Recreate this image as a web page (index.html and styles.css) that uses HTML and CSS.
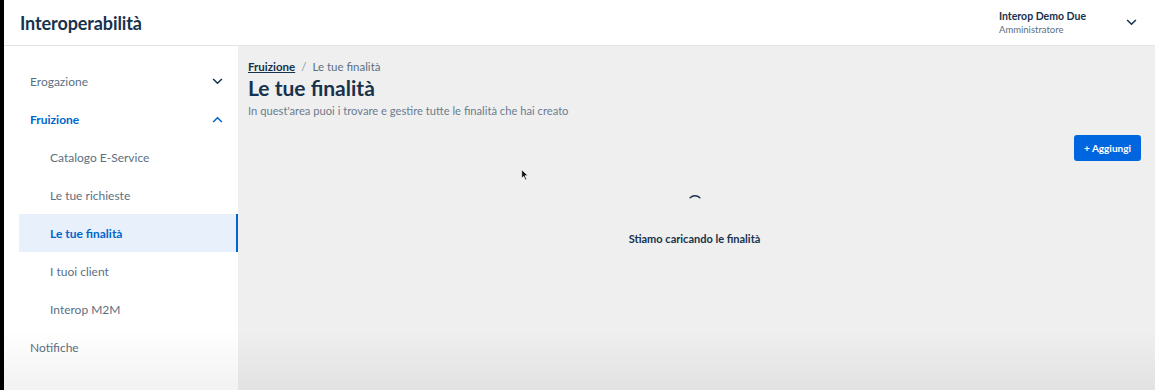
FILE: index.html
```html
<!DOCTYPE html>
<html lang="it">
<head>
  <meta charset="UTF-8">
  <meta name="viewport" content="width=device-width, initial-scale=1.0">
  <title>Interoperabilità - Le tue finalità</title>
  <link rel="stylesheet" href="styles.css">
</head>
<body>
  <div class="app">
    <header class="topbar">
      <h1 class="brand">Interoperabilità</h1>
      <div class="user">
        <div class="user-info">
          <span class="user-name">Interop Demo Due</span>
          <span class="user-role">Amministratore</span>
        </div>
        <svg class="chevron dark" viewBox="0 0 12 8" width="11" height="7"><path d="M1 1.2 L6 6 L11 1.2" fill="none" stroke="#17324d" stroke-width="1.8"/></svg>
      </div>
    </header>

    <div class="layout">
      <nav class="sidebar">
        <div class="nav-item">
          <span>Erogazione</span>
          <svg class="chevron" viewBox="0 0 12 8" width="11" height="7"><path d="M1 1.2 L6 6 L11 1.2" fill="none" stroke="#17324d" stroke-width="1.8"/></svg>
        </div>
        <div class="nav-item open">
          <span>Fruizione</span>
          <svg class="chevron" viewBox="0 0 12 8" width="11" height="7"><path d="M1 6.8 L6 2 L11 6.8" fill="none" stroke="#0066cc" stroke-width="1.8"/></svg>
        </div>
        <div class="nav-sub">Catalogo E-Service</div>
        <div class="nav-sub">Le tue richieste</div>
        <div class="nav-sub active">Le tue finalità</div>
        <div class="nav-sub">I tuoi client</div>
        <div class="nav-sub">Interop M2M</div>
        <div class="nav-item">
          <span>Notifiche</span>
        </div>
      </nav>

      <main class="content">
        <div class="breadcrumb">
          <a href="#">Fruizione</a>
          <span class="sep">/</span>
          <span>Le tue finalità</span>
        </div>
        <h2 class="page-title">Le tue finalità</h2>
        <p class="page-desc">In quest'area puoi i trovare e gestire tutte le finalità che hai creato</p>

        <div class="actions">
          <button class="btn-primary">+ Aggiungi</button>
        </div>

        <div class="loading">
          <svg class="spinner" viewBox="0 0 40 40" width="28" height="28"><path d="M13 14 A10 10 0 0 1 27 14" fill="none" stroke="#17324d" stroke-width="2" stroke-linecap="round"/></svg>
          <p>Stiamo caricando le finalità</p>
        </div>

        <svg class="cursor" viewBox="0 0 12 18" width="8" height="12"><path d="M1 1 L1 14 L4 11 L6.5 16.5 L8.5 15.5 L6 10 L10.5 10 Z" fill="#111" stroke="#fff" stroke-width="1"/></svg>
      </main>
    </div>
  </div>
  <div class="fade"></div>
</body>
</html>
```

FILE: styles.css
```css
body {
  margin: 0;
  font-family: "Lato", "Open Sans", sans-serif;
  color: #17324d;
  background: #000;
  height: 390px;
  overflow: hidden;
}

.app {
  margin-left: 4px;
  height: 390px;
  display: flex;
  flex-direction: column;
  background: #efefef;
}

.topbar {
  height: 45px;
  background: #fff;
  border-bottom: 1px solid #e3e3e3;
  display: flex;
  align-items: center;
  justify-content: space-between;
  padding: 0 16px;
}

.brand {
  margin: 0;
  font-size: 18px;
  font-weight: 700;
  color: #17324d;
  letter-spacing: -0.1px;
}

.user {
  display: flex;
  align-items: center;
  gap: 40px;
  margin-right: 2px;
}

.user-info {
  display: flex;
  flex-direction: column;
  gap: 2px;
}

.user-name {
  font-size: 10.5px;
  font-weight: 700;
}

.user-role {
  font-size: 9.5px;
  color: #5c6f82;
}

.layout {
  flex: 1;
  display: flex;
}

.sidebar {
  width: 234px;
  background: #fff;
  padding-top: 16px;
}

.nav-item,
.nav-sub {
  height: 38px;
  display: flex;
  align-items: center;
  justify-content: space-between;
  font-size: 12px;
  color: #5c6f82;
  box-sizing: border-box;
}

.nav-item {
  padding: 0 15px 0 26px;
}

.nav-item.open {
  color: #0066cc;
  font-weight: 700;
}

.nav-sub {
  margin-left: 15px;
  padding-left: 31px;
}

.nav-sub.active {
  background: #e8f0fb;
  color: #0066cc;
  font-weight: 700;
  border-right: 2px solid #0066cc;
}

.content {
  flex: 1;
  padding: 12px 14px 0 10px;
  position: relative;
}

.breadcrumb {
  font-size: 11.5px;
  color: #5c6f82;
  display: flex;
  gap: 6px;
  height: 16px;
  align-items: center;
}

.breadcrumb a {
  color: #17324d;
  font-weight: 700;
}

.sep {
  color: #8a97a5;
}

.page-title {
  margin: 0;
  font-size: 21px;
  font-weight: 700;
  line-height: 28px;
}

.page-desc {
  margin: 0;
  font-size: 11.2px;
  line-height: 18px;
  color: #6b7c8e;
}

.actions {
  display: flex;
  justify-content: flex-end;
  margin-top: 15px;
}

.btn-primary {
  background: #0066e0;
  color: #fff;
  border: none;
  border-radius: 3px;
  font-family: inherit;
  font-size: 10px;
  font-weight: 700;
  width: 67px;
  height: 26px;
  padding: 0;
}

.loading {
  display: flex;
  flex-direction: column;
  align-items: center;
  margin-top: 27px;
}

.spinner {
  display: block;
}

.loading p {
  margin: 16px 0 0;
  font-size: 11px;
  font-weight: 700;
}

.cursor {
  position: absolute;
  left: 283px;
  top: 123px;
}

.fade {
  position: fixed;
  left: 0;
  right: 0;
  bottom: 0;
  height: 60px;
  background: linear-gradient(rgba(0, 0, 0, 0), rgba(0, 0, 0, 0.05));
  pointer-events: none;
}
```
